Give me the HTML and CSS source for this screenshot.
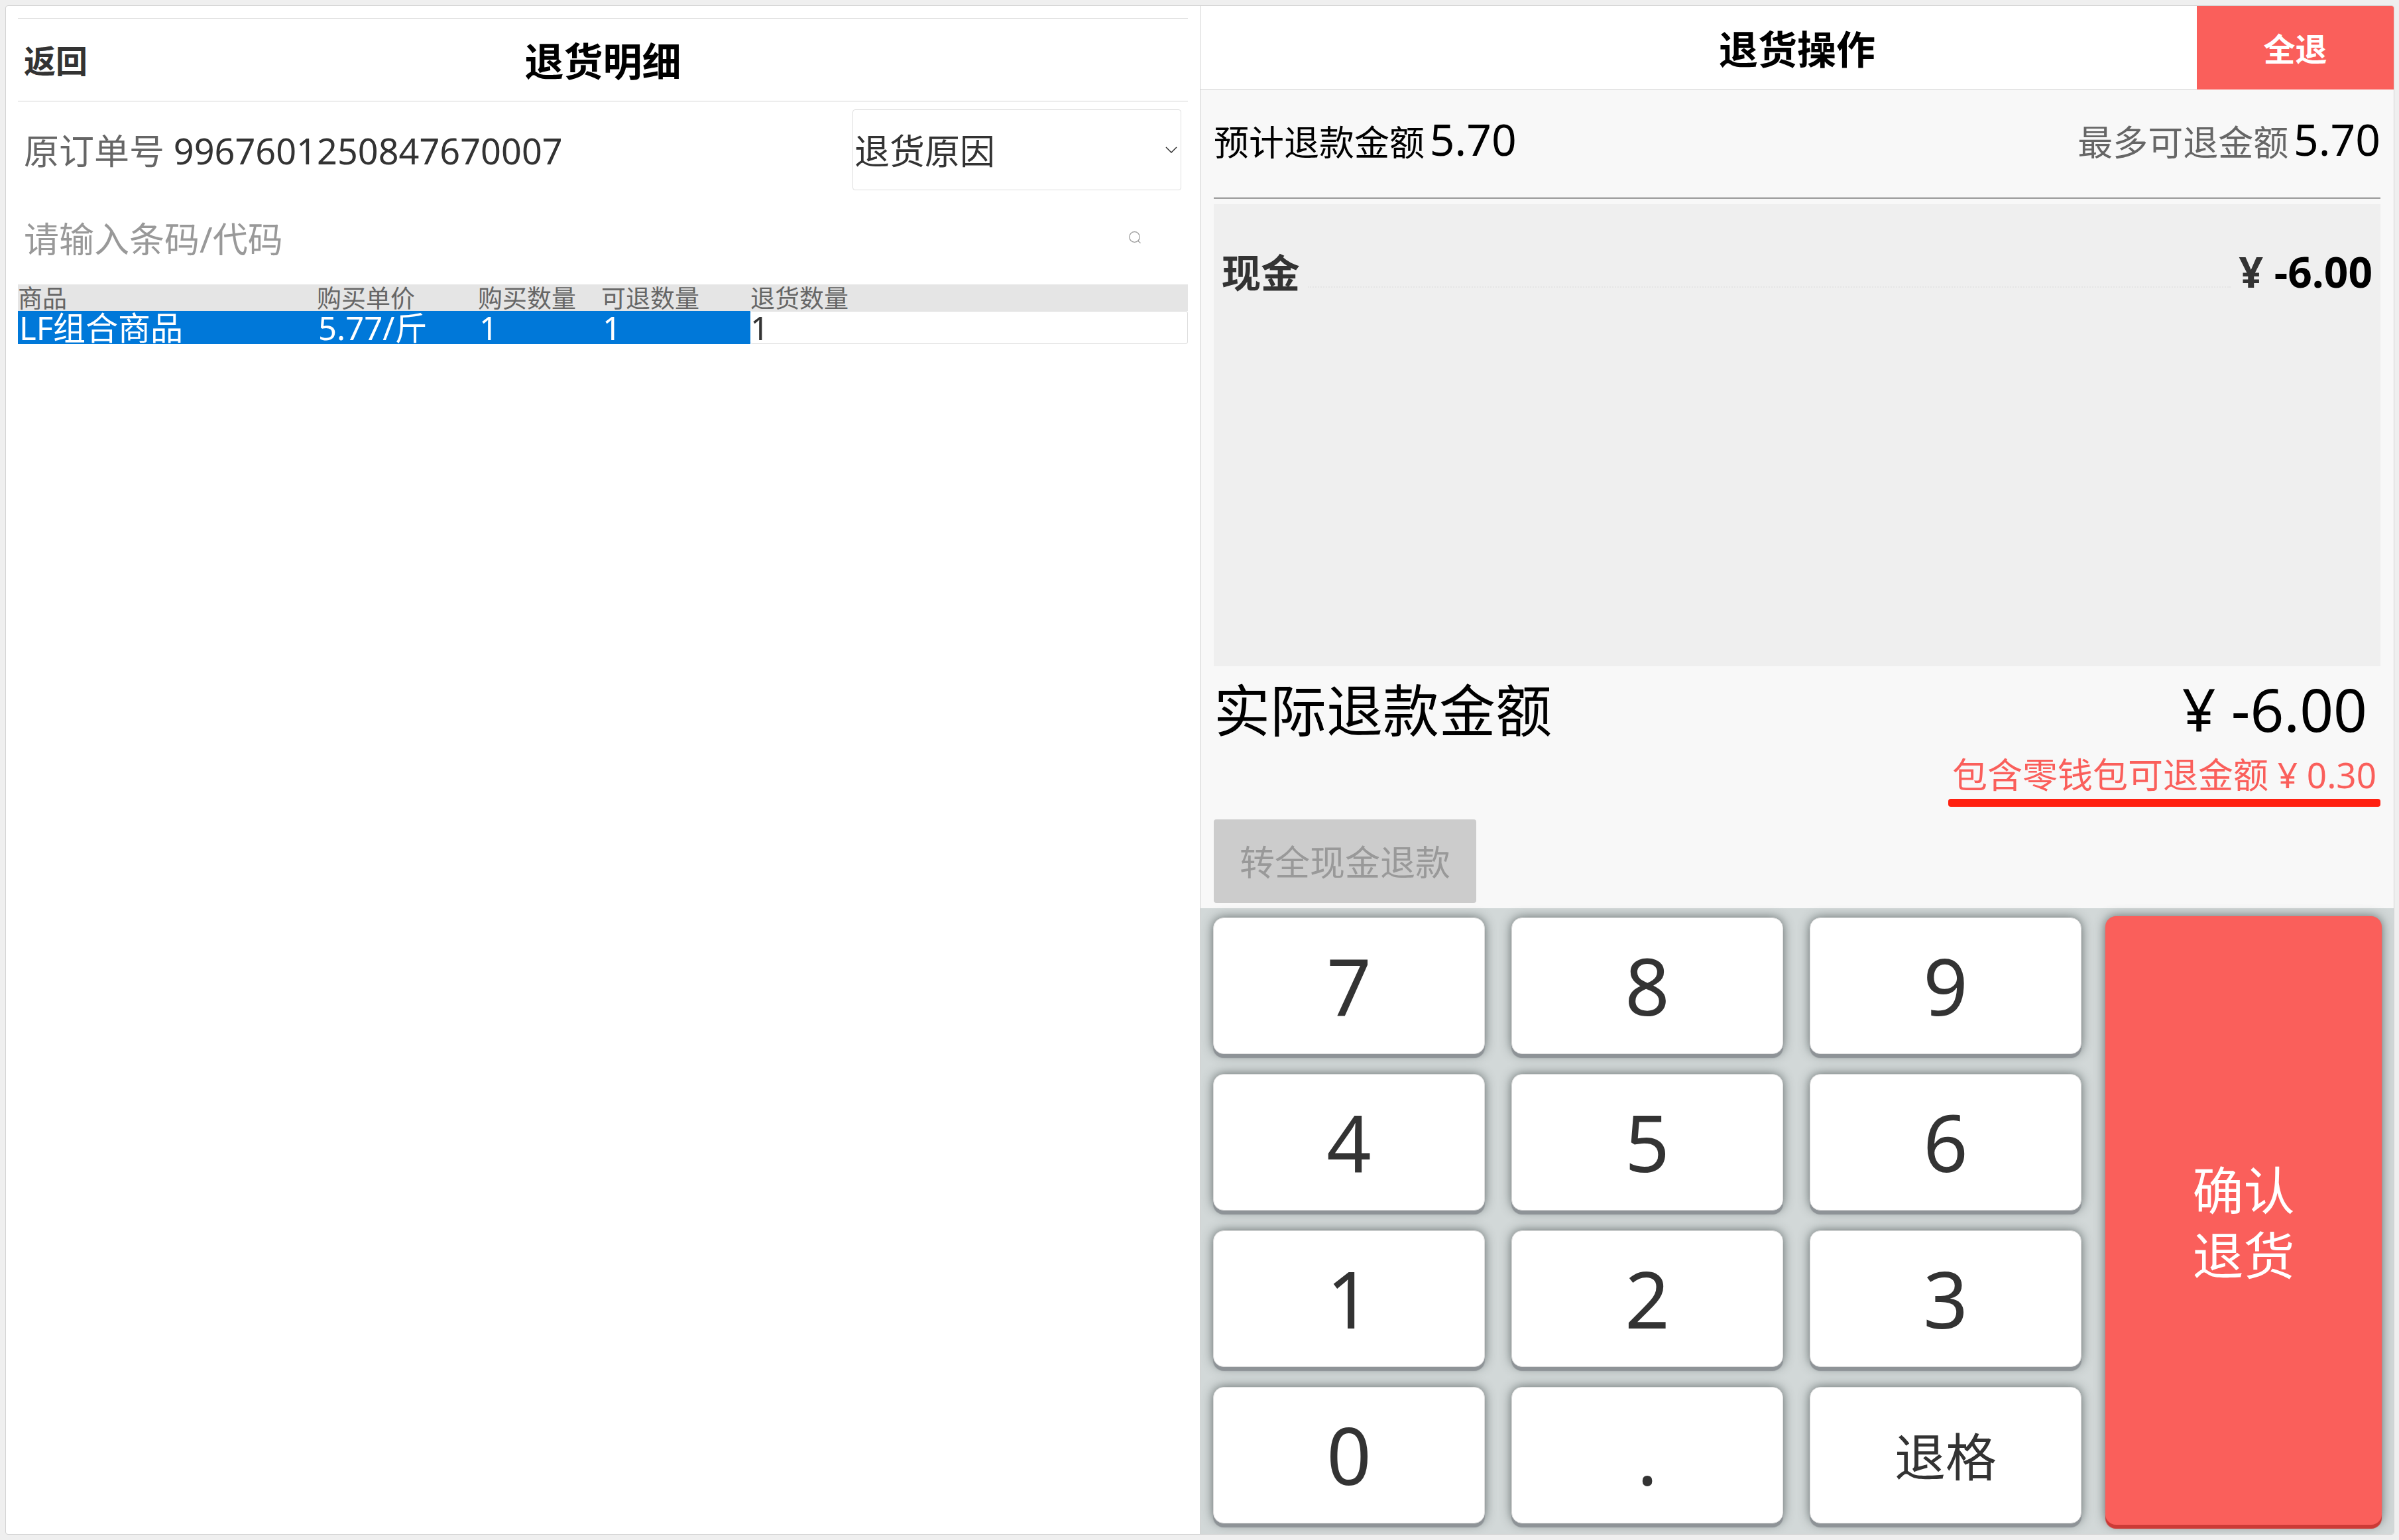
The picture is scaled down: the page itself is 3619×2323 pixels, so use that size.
FILE: index.html
```html
<!DOCTYPE html>
<html lang="zh-CN">
<head>
<meta charset="utf-8">
<meta name="viewport" content="width=device-width, initial-scale=1">
<title>退货</title>
<link rel="stylesheet" href="styles.css">
</head>
<body>
<div class="frame">
  <section class="detail">
    <header class="detail-head">
      <button class="back" type="button">返回</button>
      <h1 class="title">退货明细</h1>
    </header>
    <div class="order-row">
      <p class="order"><span class="order-label">原订单号</span> <span class="order-number">9967601250847670007</span></p>
      <div class="reason">
        <select class="reason-select" aria-label="退货原因">
          <option>退货原因</option>
        </select>
        <svg class="reason-arrow" viewBox="0 0 18 10" aria-hidden="true"><path d="M1 1l8 8 8-8" fill="none" stroke="#333" stroke-width="1.5"/></svg>
      </div>
    </div>
    <form class="search">
      <input class="search-input" type="text" placeholder="请输入条码/代码" aria-label="条码/代码">
      <button class="search-button" type="button" aria-label="搜索">
        <svg class="search-icon" viewBox="0 0 18 18" aria-hidden="true"><circle cx="8.500" cy="8.500" r="7.800" fill="none" stroke="#999" stroke-width="1.200"/><path d="M13.500 14l4.200 4" fill="none" stroke="#999" stroke-width="1.200"/></svg>
      </button>
    </form>
    <table class="goods">
      <colgroup>
        <col class="col-name"><col class="col-price"><col class="col-bought"><col class="col-left"><col>
      </colgroup>
      <thead>
        <tr><th>商品</th><th>购买单价</th><th>购买数量</th><th>可退数量</th><th>退货数量</th></tr>
      </thead>
      <tbody>
        <tr>
          <td>LF组合商品</td><td>5.77/斤</td><td>1</td><td>1</td>
          <td class="qty-cell"><input class="qty" type="text" value="1" aria-label="退货数量"></td>
        </tr>
      </tbody>
    </table>
  </section>

  <section class="refund">
    <header class="refund-head">
      <h2 class="title">退货操作</h2>
      <button class="refund-all" type="button">全退</button>
    </header>
    <div class="refund-body">
      <div class="summary">
        <p class="sum">预计退款金额 <span class="sum-value">5.70</span></p>
        <p class="sum sum-max">最多可退金额 <span class="sum-value">5.70</span></p>
      </div>
      <div class="payments">
        <div class="payment">
          <span>现金</span>
          <span class="dots"></span>
          <span class="money">¥ <span class="amount">-6.00</span></span>
        </div>
      </div>
      <div class="actual">
        <span>实际退款金额</span>
        <span class="actual-value">¥ -6.00</span>
      </div>
      <p class="wallet">包含零钱包可退金额 ¥ 0.30</p>
      <button class="to-cash" type="button" disabled>转全现金退款</button>
    </div>
    <div class="keypad">
      <button class="key" type="button">7</button>
      <button class="key" type="button">8</button>
      <button class="key" type="button">9</button>
      <button class="confirm" type="button">确认<br>退货</button>
      <button class="key" type="button">4</button>
      <button class="key" type="button">5</button>
      <button class="key" type="button">6</button>
      <button class="key" type="button">1</button>
      <button class="key" type="button">2</button>
      <button class="key" type="button">3</button>
      <button class="key" type="button">0</button>
      <button class="key" type="button">.</button>
      <button class="key key-text" type="button">退格</button>
    </div>
  </section>
</div>
</body>
</html>
```
FILE: styles.css
```css
* {
  box-sizing: border-box;
}

body {
  margin: 0;
  min-height: 100vh;
  padding: 8px 7px 8px 8px;
  display: flex;
  background: #efefef;
  color: #333;
  font-family: "Noto Sans", "Noto Sans CJK SC", sans-serif;
  font-size: 53px;
  line-height: 72px;
}

h1, h2, p {
  margin: 0;
}

button, input, select {
  margin: 0;
  padding: 0;
  border: 0;
  background: none;
  color: inherit;
  font: inherit;
}

.frame {
  flex: 1;
  display: grid;
  grid-template-columns: minmax(0, 1fr) minmax(0, 1fr);
  border: 1px solid #d2d2d2;
  border-radius: 4px;
  background: #fff;
  overflow: hidden;
}

.title {
  grid-column: 2;
  padding-top: 4px;
  color: #000;
  font-size: 59px;
  font-weight: 700;
}

/* left: order detail */

.detail {
  padding: 18px;
}

.detail-head {
  display: grid;
  grid-template-columns: 1fr auto 1fr;
  align-items: center;
  height: 126px;
  border-top: 1px solid #d2d2d2;
  border-bottom: 1px solid #d2d2d2;
}

.back {
  justify-self: start;
  padding: 4px 0 0 9px;
  font-size: 48px;
  font-weight: 700;
}

.order-row {
  display: flex;
  justify-content: space-between;
  align-items: center;
  padding: 12px 10px 0 9px;
}

.order {
  padding-top: 2px;
}

.order-label {
  color: #666;
}

.order-number {
  font-size: 54px;
}

.reason {
  position: relative;
  width: 496px;
}

.reason-select {
  appearance: none;
  display: block;
  width: 100%;
  height: 122px;
  padding: 4px 48px 0 2px;
  border: 1px solid #ddd;
  border-radius: 4px;
  background: #fff;
}

.reason-arrow {
  position: absolute;
  top: 56px;
  right: 6px;
  width: 18px;
  height: 10px;
  pointer-events: none;
}

.search {
  display: flex;
  align-items: center;
  height: 142px;
  padding: 0 71px 0 9px;
}

.search-input {
  flex: 1;
  height: 100px;
  padding-top: 4px;
}

.search-input::placeholder {
  color: #999;
  opacity: 1;
}

.search-button {
  display: flex;
}

.search-icon {
  width: 18px;
  height: 18px;
}

.goods {
  width: 100%;
  table-layout: fixed;
  border-collapse: collapse;
}

.col-name { width: 451px; }
.col-price { width: 243px; }
.col-bought { width: 186px; }
.col-left { width: 225px; }

.goods th {
  height: 40px;
  padding: 2px 0 0;
  background: #e5e5e5;
  color: #666;
  font-size: 37px;
  font-weight: 400;
  line-height: 38px;
  text-align: left;
}

.goods td {
  height: 50px;
  padding: 0 2px;
  background: #0078d9;
  color: #fff;
  font-size: 49px;
  line-height: 50px;
}

.goods .qty-cell {
  padding: 0;
  background: #fff;
}

.qty {
  display: block;
  width: 100%;
  height: 50px;
  border: 1px solid #ddd;
  border-left: 0;
  border-radius: 4px;
  color: #333;
}

/* right: refund */

.refund {
  display: flex;
  flex-direction: column;
  border-left: 1px solid #d2d2d2;
  background: #f8f8f8;
}

.refund-head {
  display: grid;
  grid-template-columns: 1fr auto 1fr;
  align-items: center;
  height: 126px;
  background: linear-gradient(#d2d2d2, #d2d2d2) bottom / 100% 1px no-repeat #fff;
}

.refund-all {
  justify-self: end;
  width: 297px;
  height: 126px;
  padding-top: 4px;
  background: #fa5f5b;
  color: #fff;
  font-size: 48px;
  font-weight: 700;
}

.refund-body {
  flex: 1;
  display: flex;
  flex-direction: column;
  padding: 0 20px 8px 20px;
}

.summary {
  display: flex;
  justify-content: space-between;
  align-items: center;
  height: 165px;
  padding-bottom: 8px;
  border-bottom: 3px double #999;
  color: #000;
}

.sum-max {
  color: #666;
}

.sum-value {
  margin-left: -6px;
  color: #000;
  font-size: 66px;
}

.payments {
  flex: 1;
  margin-top: 8px;
  padding: 66px 12px 0;
  background: #efefef;
}

.payment {
  display: flex;
  align-items: baseline;
  font-size: 59px;
  font-weight: 700;
}

.money {
  font-size: 64px;
}

.payment .amount {
  color: #000;
}

.dots {
  flex: 1;
  margin: 0 12px;
  border-bottom: 2px dotted #e5e5e5;
}

.actual {
  display: flex;
  justify-content: space-between;
  align-items: baseline;
  padding: 9px 20px 12px 0;
  color: #000;
  font-size: 85px;
  line-height: 112px;
}

.actual-value {
  font-size: 89px;
}

.wallet {
  align-self: flex-end;
  padding: 0 6px;
  color: #fa5f5b;
  line-height: 60px;
}

.wallet::after {
  content: "";
  display: block;
  height: 12px;
  margin: 6px -6px 0;
  border-radius: 4px;
  background: #ff2010;
}

.to-cash {
  align-self: flex-start;
  width: 396px;
  height: 126px;
  margin-top: 19px;
  padding-top: 4px;
  border-radius: 4px;
  background: #ccc;
  color: #999;
}

.keypad {
  display: grid;
  grid-template-columns: 410fr 410fr 410fr 413fr;
  grid-auto-rows: 206px;
  gap: 30px 40px;
  padding: 14px 18px 16px 19px;
  background: #d2d8d8;
}

.key {
  border: 1px solid #ddd;
  border-radius: 16px;
  background: #fff;
  box-shadow: 0 6px 1px #8e9397, 0 0 16px rgba(50, 60, 60, 0.7);
  font-size: 118px;
  line-height: 160px;
}

.key-text {
  padding-top: 6px;
  font-size: 77px;
}

.confirm {
  grid-column: 4;
  grid-row: 1 / 5;
  margin: -2px 0 -2px -4px;
  padding-top: 8px;
  border-radius: 16px;
  background: #fa5f5b;
  box-shadow: 0 6px 1px #cc3a36, 0 0 16px rgba(50, 60, 60, 0.7);
  color: #fff;
  font-size: 77px;
  line-height: 98px;
}
```
